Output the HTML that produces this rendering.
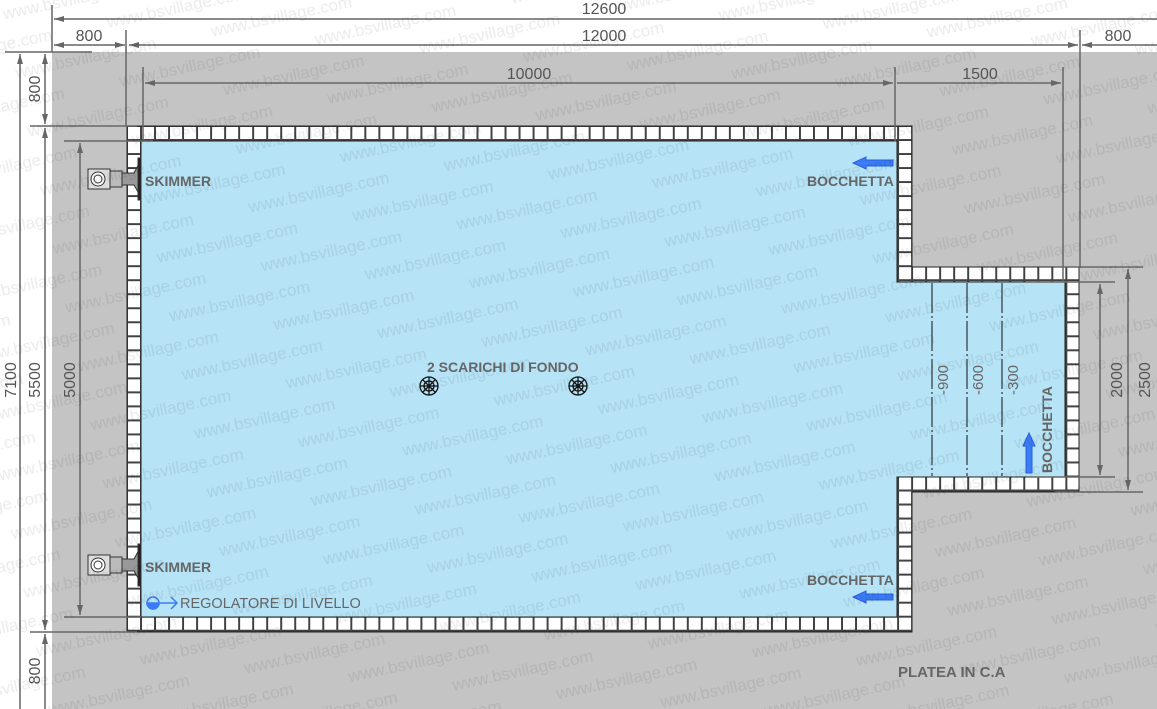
<!DOCTYPE html>
<html><head><meta charset="utf-8"><style>
html,body{margin:0;padding:0;background:#fff;}
svg{display:block;font-family:"Liberation Sans",sans-serif;}
</style></head><body>
<svg width="1157" height="709" viewBox="0 0 1157 709" xmlns="http://www.w3.org/2000/svg">
<defs>
<pattern id="tile" x="127" y="126" width="14.02" height="14.02" patternUnits="userSpaceOnUse">
<rect x="0.5" y="0.5" width="13" height="13" fill="#fff" stroke="#333" stroke-width="0.9"/>
</pattern>
<pattern id="wm" x="0" y="0" width="200" height="60" patternUnits="userSpaceOnUse" patternTransform="rotate(-12)">
<text x="0" y="20" font-size="17" fill="#000" fill-opacity="0.08">www.bsvillage.com</text>
<text x="100" y="50" font-size="17" fill="#000" fill-opacity="0.08">www.bsvillage.com</text>
<text x="-100" y="50" font-size="17" fill="#000" fill-opacity="0.08">www.bsvillage.com</text>
</pattern>
<marker id="ar" viewBox="0 0 10 6" refX="10" refY="3" markerWidth="10" markerHeight="6" orient="auto-start-reverse" markerUnits="userSpaceOnUse">
<path d="M0,0 L10,3 L0,6 z" fill="#666"/>
</marker>
</defs>
<rect x="52" y="52" width="1105" height="657" fill="#c4c4c4"/>
<path d="M127,126 H912 V267 H1079 V492 H912 V632 H127 Z" fill="url(#tile)" stroke="#222"/>
<path d="M141,141 H897 V282 H1065 V477 H897 V617 H141 Z" fill="#b6e3f6" stroke="#222"/>
<g stroke="#111" stroke-width="1" stroke-dasharray="30,3,2,3">
<line x1="932" y1="283" x2="932" y2="476"/>
<line x1="967" y1="283" x2="967" y2="476"/>
<line x1="1002" y1="283" x2="1002" y2="476"/>
</g>
<g fill="#666" font-size="15" text-anchor="middle">
<text transform="translate(948,380) rotate(-90)">-900</text>
<text transform="translate(983,380) rotate(-90)">-600</text>
<text transform="translate(1018,380) rotate(-90)">-300</text>
</g>
<g stroke="#666" stroke-width="1.5" fill="none">
<line x1="52" y1="5" x2="52" y2="52"/>
<line x1="54" y1="19" x2="1157" y2="19" marker-start="url(#ar)"/>
<line x1="54" y1="45" x2="125" y2="45" marker-start="url(#ar)" marker-end="url(#ar)"/>
<line x1="126" y1="30" x2="126" y2="126"/>
<line x1="129" y1="45" x2="1078" y2="45" marker-start="url(#ar)" marker-end="url(#ar)"/>
<line x1="1080" y1="30" x2="1080" y2="268"/>
<line x1="1082" y1="45" x2="1157" y2="45" marker-start="url(#ar)"/>
<line x1="143" y1="67" x2="143" y2="140"/>
<line x1="145" y1="83" x2="893" y2="83" marker-start="url(#ar)" marker-end="url(#ar)"/>
<line x1="895" y1="67" x2="895" y2="141"/>
<line x1="897" y1="83" x2="1061" y2="83" marker-end="url(#ar)"/>
<line x1="1063" y1="67" x2="1063" y2="282"/>
<line x1="5" y1="52" x2="92" y2="52"/>
<line x1="20" y1="54" x2="20" y2="709" marker-start="url(#ar)"/>
<line x1="30" y1="126" x2="137" y2="126"/>
<line x1="45" y1="54" x2="45" y2="124" marker-start="url(#ar)" marker-end="url(#ar)"/>
<line x1="45" y1="128" x2="45" y2="630" marker-start="url(#ar)" marker-end="url(#ar)"/>
<line x1="30" y1="632" x2="137" y2="632"/>
<line x1="45" y1="634" x2="45" y2="709" marker-start="url(#ar)"/>
<line x1="64" y1="141" x2="153" y2="141"/>
<line x1="80" y1="143" x2="80" y2="615" marker-start="url(#ar)" marker-end="url(#ar)"/>
<line x1="64" y1="617" x2="141" y2="617"/>
<line x1="1055" y1="267" x2="1143" y2="267"/>
<line x1="1026" y1="282" x2="1115" y2="282"/>
<line x1="1026" y1="477" x2="1115" y2="477"/>
<line x1="1055" y1="492" x2="1143" y2="492"/>
<line x1="1100" y1="284" x2="1100" y2="475" marker-start="url(#ar)" marker-end="url(#ar)"/>
<line x1="1128" y1="269" x2="1128" y2="490" marker-start="url(#ar)" marker-end="url(#ar)"/>
</g>
<g fill="#555" font-size="16" text-anchor="middle">
<text x="604" y="14">12600</text>
<text x="89" y="41">800</text>
<text x="604" y="41">12000</text>
<text x="1118" y="41">800</text>
<text x="529" y="79">10000</text>
<text x="980" y="79">1500</text>
<text transform="translate(16,380) rotate(-90)">7100</text>
<text transform="translate(40,89) rotate(-90)">800</text>
<text transform="translate(40,380) rotate(-90)">5500</text>
<text transform="translate(40,671) rotate(-90)">800</text>
<text transform="translate(75,380) rotate(-90)">5000</text>
<text transform="translate(1122,380) rotate(-90)">2000</text>
<text transform="translate(1150,380) rotate(-90)">2500</text>
</g>
<g fill="#666" font-size="14" font-weight="bold">
<text x="145" y="186">SKIMMER</text>
<text x="145" y="572">SKIMMER</text>
<text x="180" y="608" font-weight="normal" font-size="14.5">REGOLATORE DI LIVELLO</text>
<text x="807" y="186">BOCCHETTA</text>
<text x="807" y="585">BOCCHETTA</text>
<text x="427" y="372">2 SCARICHI DI FONDO</text>
<text transform="translate(1052,473) rotate(-90)">BOCCHETTA</text>
<text x="898" y="677" font-size="15">PLATEA IN C.A</text>
</g>
<g id="sk" stroke="#333" stroke-width="1">
<rect x="88" y="169" width="22" height="20" fill="#ddd"/>
<circle cx="98" cy="179" r="7" fill="#fff"/><circle cx="98" cy="179" r="4" fill="none"/>
<rect x="110" y="171" width="12" height="16" fill="#bbb"/>
<path d="M122,173 H134 L141,160 V197 L134,185 H122 Z" fill="#999"/>
<rect x="138" y="158" width="3" height="42" fill="#222"/>
</g>
<use href="#sk" y="386"/>
<g stroke="#111" fill="none" stroke-width="1.3">
<circle cx="429" cy="386" r="9"/><circle cx="429" cy="386" r="5"/>
<path d="M420,386H438M429,377V395M423,380L435,392M435,380L423,392"/>
<circle cx="578" cy="386" r="9"/><circle cx="578" cy="386" r="5"/>
<path d="M569,386H587M578,377V395M572,380L584,392M584,380L572,392"/>
</g>
<g fill="#3a7cf5" stroke="#2d5ee0">
<path d="M893,160 H866 V157 L853,163 L866,169 V166 H893 Z"/>
<path d="M893,594 H866 V591 L853,597 L866,603 V600 H893 Z"/>
<path d="M1026,473 V446 H1023 L1029,433 L1035,446 H1032 V473 Z"/>
</g>
<g stroke="#3a7cf5" stroke-width="1.5" fill="none">
<circle cx="153" cy="603" r="6"/><path d="M147,603 A6,6 0 0 0 159,603 Z" fill="#3a7cf5"/>
<path d="M159,603 H177 M171,597 L177,603 L171,609"/>
</g>
<rect x="0" y="0" width="1157" height="709" fill="url(#wm)"/>
</svg>
</body></html>
